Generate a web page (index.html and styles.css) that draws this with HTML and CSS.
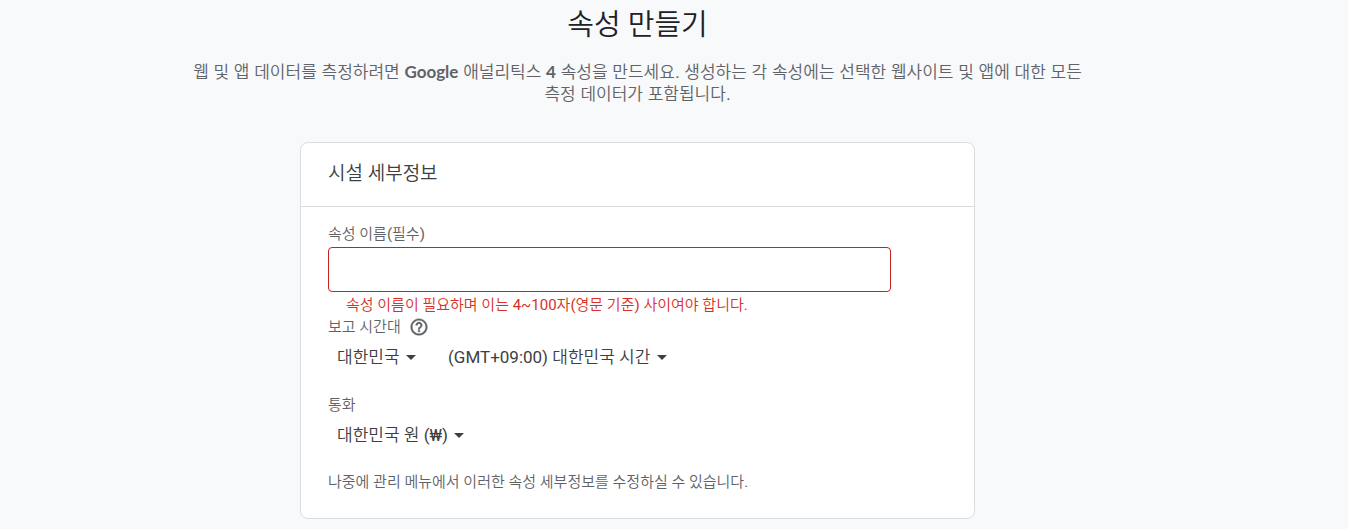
FILE: index.html
```html
<!DOCTYPE html>
<html lang="ko">
<head>
  <meta charset="UTF-8" />
  <meta name="viewport" content="width=device-width, initial-scale=1.0" />
  <title>속성 만들기</title>
  <link rel="stylesheet" href="styles.css">
</head>
<body>
  <main class="page">
    <header class="intro">
      <h1>속성 만들기</h1>
      <p>웹 및 앱 데이터를 측정하려면 <span class="product">Google</span> 애널리틱스 <span class="product">4</span> 속성을 만드세요. 생성하는 각 속성에는 선택한 웹사이트 및 앱에 대한 모든 측정 데이터가 포함됩니다.</p>
    </header>

    <form class="card">
      <h2>시설 세부정보</h2>
      <div class="card-body">
        <div class="field">
          <label for="name">속성 이름(필수)</label>
          <input type="text" id="name" aria-invalid="true" aria-describedby="name-error" required />
          <p class="error" id="name-error">속성 이름이 필요하며 이는 4~100자(영문 기준) 사이여야 합니다.</p>
        </div>

        <div class="field timezone">
          <div class="label-row">
            <label for="country">보고 시간대</label>
            <button type="button" class="help" aria-label="도움말">
              <svg viewBox="0 0 24 24" width="20" height="20" fill="currentColor" stroke="currentColor" stroke-width="0.4">
                <path d="M11 18h2v-2h-2v2zm1-16C6.48 2 2 6.48 2 12s4.48 10 10 10 10-4.48 10-10S17.52 2 12 2zm0 18c-4.41 0-8-3.59-8-8s3.59-8 8-8 8 3.59 8 8-3.59 8-8 8zm0-14c-2.21 0-4 1.79-4 4h2c0-1.1.9-2 2-2s2 .9 2 2c0 2-3 1.75-3 5h2c0-2.25 3-2.5 3-5 0-2.21-1.79-4-4-4z"/>
              </svg>
            </button>
          </div>
          <div class="selects">
            <span class="select">
              <select id="country"><option>대한민국</option></select>
            </span>
            <span class="select">
              <select id="zone" aria-label="시간대"><option>(GMT+09:00) 대한민국 시간</option></select>
            </span>
          </div>
        </div>

        <div class="field currency">
          <label for="currency">통화</label>
          <div class="selects">
            <span class="select">
              <select id="currency"><option>대한민국 원 (₩)</option></select>
            </span>
          </div>
        </div>

        <p class="note">나중에 관리 메뉴에서 이러한 속성 세부정보를 수정하실 수 있습니다.</p>
      </div>
    </form>
  </main>
</body>
</html>
```

FILE: styles.css
```css
* { box-sizing: border-box; }
body { margin: 0; background: #f8f9fb; color: #5f6368; font-family: Roboto, "Noto Sans CJK KR DemiLight", "Noto Sans CJK KR", sans-serif; font-size: 15px; line-height: 20px; word-break: keep-all; }
h1, h2, p { margin: 0; font-weight: 400; }

.page { display: flex; flex-direction: column; align-items: center; padding: 5px 73px 10px 0; }
.intro { max-width: 904px; text-align: center; }
.intro h1 { color: #202124; font-size: 29px; line-height: 40px; }
.intro p { margin-top: 17px; font-family: "Liberation Sans", "Noto Sans CJK KR DemiLight", "Noto Sans CJK KR", sans-serif; font-size: 17px; line-height: 22px; }
.product { font-family: Lato, sans-serif; font-weight: 700; line-height: 20px; }

.card { width: 100%; max-width: 675px; margin-top: 36px; background: #fff; border: 1px solid #dadce0; border-radius: 8px; }
.card h2 { padding: 19px 27px 20px; border-bottom: 1px solid #dadce0; color: #3c4043; font-size: 19px; line-height: 24px; }
.card-body { padding: 17px 27px 26px; }

.field label { display: block; }
.field input { display: block; width: 100%; max-width: 563px; height: 45px; margin-top: 3px; padding: 0 12px; border: 1px solid #c5221f; border-radius: 4px; background: #fff; font: inherit; outline: none; }
.error { margin-top: 3px; padding-left: 18px; color: #d93025; }

.timezone { margin-top: 2px; }
.currency { margin-top: 26px; }
.label-row { display: flex; align-items: center; gap: 8px; }
.help { display: flex; padding: 0; border: 0; background: none; color: #5f6368; cursor: pointer; }

.selects { display: flex; gap: 32px; margin-top: 8px; padding-left: 9px; }
.select { position: relative; display: flex; }
.select select { appearance: none; margin: 0; padding: 0 16px 0 0; border: 0; background: none; color: #3c4043; font-family: inherit; font-size: 17px; line-height: 24px; cursor: pointer; }
.select::after { content: ""; position: absolute; right: 0; top: 10px; border: 5px solid transparent; border-top-color: #3c4043; border-bottom: 0; pointer-events: none; }

.note { margin-top: 25px; }
```
